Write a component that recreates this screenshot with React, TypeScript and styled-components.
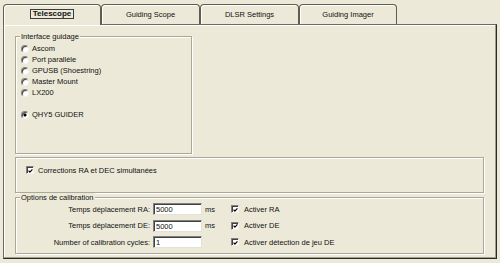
import React from 'react'
import styled, { createGlobalStyle } from 'styled-components'

const GlobalStyle = createGlobalStyle`
  html, body {
    margin: 0;
    padding: 0;
    background: #ece9d8;
  }
  body {
    font-family: "Liberation Sans", Arial, sans-serif;
    font-size: 7.5px;
    color: #111;
  }
`

const tabs = [
  { label: 'Telescope', width: 98 },
  { label: 'Guiding Scope', width: 99 },
  { label: 'DLSR Settings', width: 99 },
  { label: 'Guiding Imager', width: 98 },
]

const interfaces = ['Ascom', 'Port parallèle', 'GPUSB (Shoestring)', 'Master Mount', 'LX200']

const calibration = [
  { label: 'Temps déplacement RA:', value: '5000', unit: 'ms', check: 'Activer RA' },
  { label: 'Temps déplacement DE:', value: '5000', unit: 'ms', check: 'Activer DE' },
  { label: 'Number of calibration cycles:', value: '1', unit: '', check: 'Activer détection de jeu DE' },
]

const CheckBox = () => (
  <StyledCheck>
    <svg width="6" height="6" viewBox="0 0 6 6">
      <path d="M0.7 2.6 L2.3 4.3 L5.3 1.1" fill="none" stroke="#000" strokeWidth="1.4" />
    </svg>
  </StyledCheck>
)

const App = () => {
  return (
    <>
      <GlobalStyle />
      <StyledWindow>
        <StyledTabStrip>
          {tabs.map((t, i) => (
            <StyledTab key={t.label} $active={i === 0} $width={t.width}>
              {i === 0 ? <StyledFocus>{t.label}</StyledFocus> : t.label}
            </StyledTab>
          ))}
        </StyledTabStrip>
        <StyledPanel>
          <StyledGroup $width={177} $height={118}>
            <StyledGroupLabel>Interface guidage</StyledGroupLabel>
            <StyledRadioList>
              {interfaces.map((name) => (
                <StyledRadioRow key={name}>
                  <StyledRadio />
                  {name}
                </StyledRadioRow>
              ))}
              <StyledRadioRow $spaced>
                <StyledRadio $checked />
                QHY5 GUIDER
              </StyledRadioRow>
            </StyledRadioList>
          </StyledGroup>
          <StyledGroup $height={36} $gap={3}>
            <StyledCheckRow>
              <CheckBox />
              Corrections RA et DEC simultanées
            </StyledCheckRow>
          </StyledGroup>
          <StyledGroup $height={57} $gap={4}>
            <StyledGroupLabel>Options de calibration</StyledGroupLabel>
            <StyledCalibGrid>
              {calibration.map((row) => (
                <React.Fragment key={row.label}>
                  <StyledFieldLabel>{row.label}</StyledFieldLabel>
                  <StyledField readOnly defaultValue={row.value} />
                  <StyledUnit>{row.unit}</StyledUnit>
                  <CheckBox />
                  <StyledUnit>{row.check}</StyledUnit>
                </React.Fragment>
              ))}
            </StyledCalibGrid>
          </StyledGroup>
        </StyledPanel>
      </StyledWindow>
    </>
  )
}
export default App

const StyledWindow = styled.div`
  width: 500px;
  height: 263px;
  box-sizing: border-box;
  padding: 4px 4px 0 3px;
  display: flex;
  flex-direction: column;
  overflow: hidden;
`
const StyledTabStrip = styled.div`
  display: flex;
  height: 20px;
  position: relative;
  z-index: 1;
`
const StyledTab = styled.div<{ $active?: boolean; $width: number }>`
  width: ${(p) => p.$width}px;
  height: ${(p) => (p.$active ? 21 : 20)}px;
  box-sizing: border-box;
  border: 1px solid #5f5d52;
  border-bottom: none;
  border-radius: 4px 4px 0 0;
  box-shadow: inset 1px 1px 0 #fff;
  background: #ece9d8;
  display: flex;
  align-items: center;
  justify-content: center;
  padding-bottom: ${(p) => (p.$active ? 2 : 1)}px;
  font-weight: ${(p) => (p.$active ? 'bold' : 'normal')};
  font-size: ${(p) => (p.$active ? 8 : 7.5)}px;
`
const StyledFocus = styled.span`
  border: 1px solid #3c3c3c;
  padding: 0 2px;
  line-height: 8px;
`
const StyledPanel = styled.div`
  width: 494px;
  height: 235px;
  box-sizing: border-box;
  border: 1px solid #6d6b60;
  border-right-color: #2b2a26;
  border-bottom-color: #2b2a26;
  box-shadow: inset -1px -1px 0 #a09e90, inset 1px 1px 0 #fff;
  padding: 11px 12px 0 11px;
  display: flex;
  flex-direction: column;
  align-items: flex-start;
`
const StyledGroup = styled.div<{ $width?: number; $height: number; $gap?: number }>`
  position: relative;
  box-sizing: border-box;
  width: ${(p) => (p.$width ? `${p.$width}px` : '100%')};
  height: ${(p) => p.$height}px;
  margin-top: ${(p) => p.$gap ?? 0}px;
  border: 1px solid #aca899;
  box-shadow: inset 1px 1px 0 #fff, 1px 1px 0 #fff;
`
const StyledGroupLabel = styled.span`
  position: absolute;
  top: -5px;
  left: 4px;
  padding: 0 1px;
  line-height: 9px;
  background: #ece9d8;
`
const StyledRadioList = styled.div`
  display: flex;
  flex-direction: column;
  padding: 6px 0 0 5px;
`
const StyledRadioRow = styled.div<{ $spaced?: boolean }>`
  display: flex;
  align-items: center;
  gap: 3px;
  height: 11px;
  margin-top: ${(p) => (p.$spaced ? 11 : 0)}px;
`
const StyledRadio = styled.span<{ $checked?: boolean }>`
  width: 8px;
  height: 8px;
  box-sizing: border-box;
  border-radius: 50%;
  border: 1px solid;
  border-color: #808080 #f4f2ea #f4f2ea #808080;
  box-shadow: inset 1px 1px 0 #404040;
  background: ${(p) =>
    p.$checked ? 'radial-gradient(circle, #000 0 1.3px, #fff 1.8px)' : '#fff'};
  flex-shrink: 0;
`
const StyledCheck = styled.span`
  width: 8px;
  height: 8px;
  box-sizing: border-box;
  border: 1px solid;
  border-color: #808080 #f4f2ea #f4f2ea #808080;
  box-shadow: inset 1px 1px 0 #404040;
  background: #fff;
  display: flex;
  align-items: center;
  justify-content: center;
  flex-shrink: 0;
  svg {
    margin: 1px 0 0 1px;
  }
`
const StyledCheckRow = styled.div`
  display: flex;
  align-items: center;
  gap: 4px;
  height: 8px;
  padding: 8px 0 0 10px;
`
const StyledCalibGrid = styled.div`
  display: grid;
  grid-template-columns: 134px 49px 23px 10px auto;
  grid-auto-rows: 12px;
  column-gap: 3px;
  row-gap: 4.5px;
  align-items: center;
  padding-top: 5px;
`
const StyledFieldLabel = styled.span`
  text-align: right;
`
const StyledField = styled.input`
  width: 49px;
  height: 12px;
  box-sizing: border-box;
  margin: 0;
  padding: 1px 0 0 2px;
  border: 1px solid;
  border-color: #808080 #e4e2d8 #e4e2d8 #808080;
  box-shadow: inset 1px 1px 0 #404040;
  background: #fff;
  font: inherit;
  color: #111;
  outline: none;
`
const StyledUnit = styled.span`
  white-space: nowrap;
`
